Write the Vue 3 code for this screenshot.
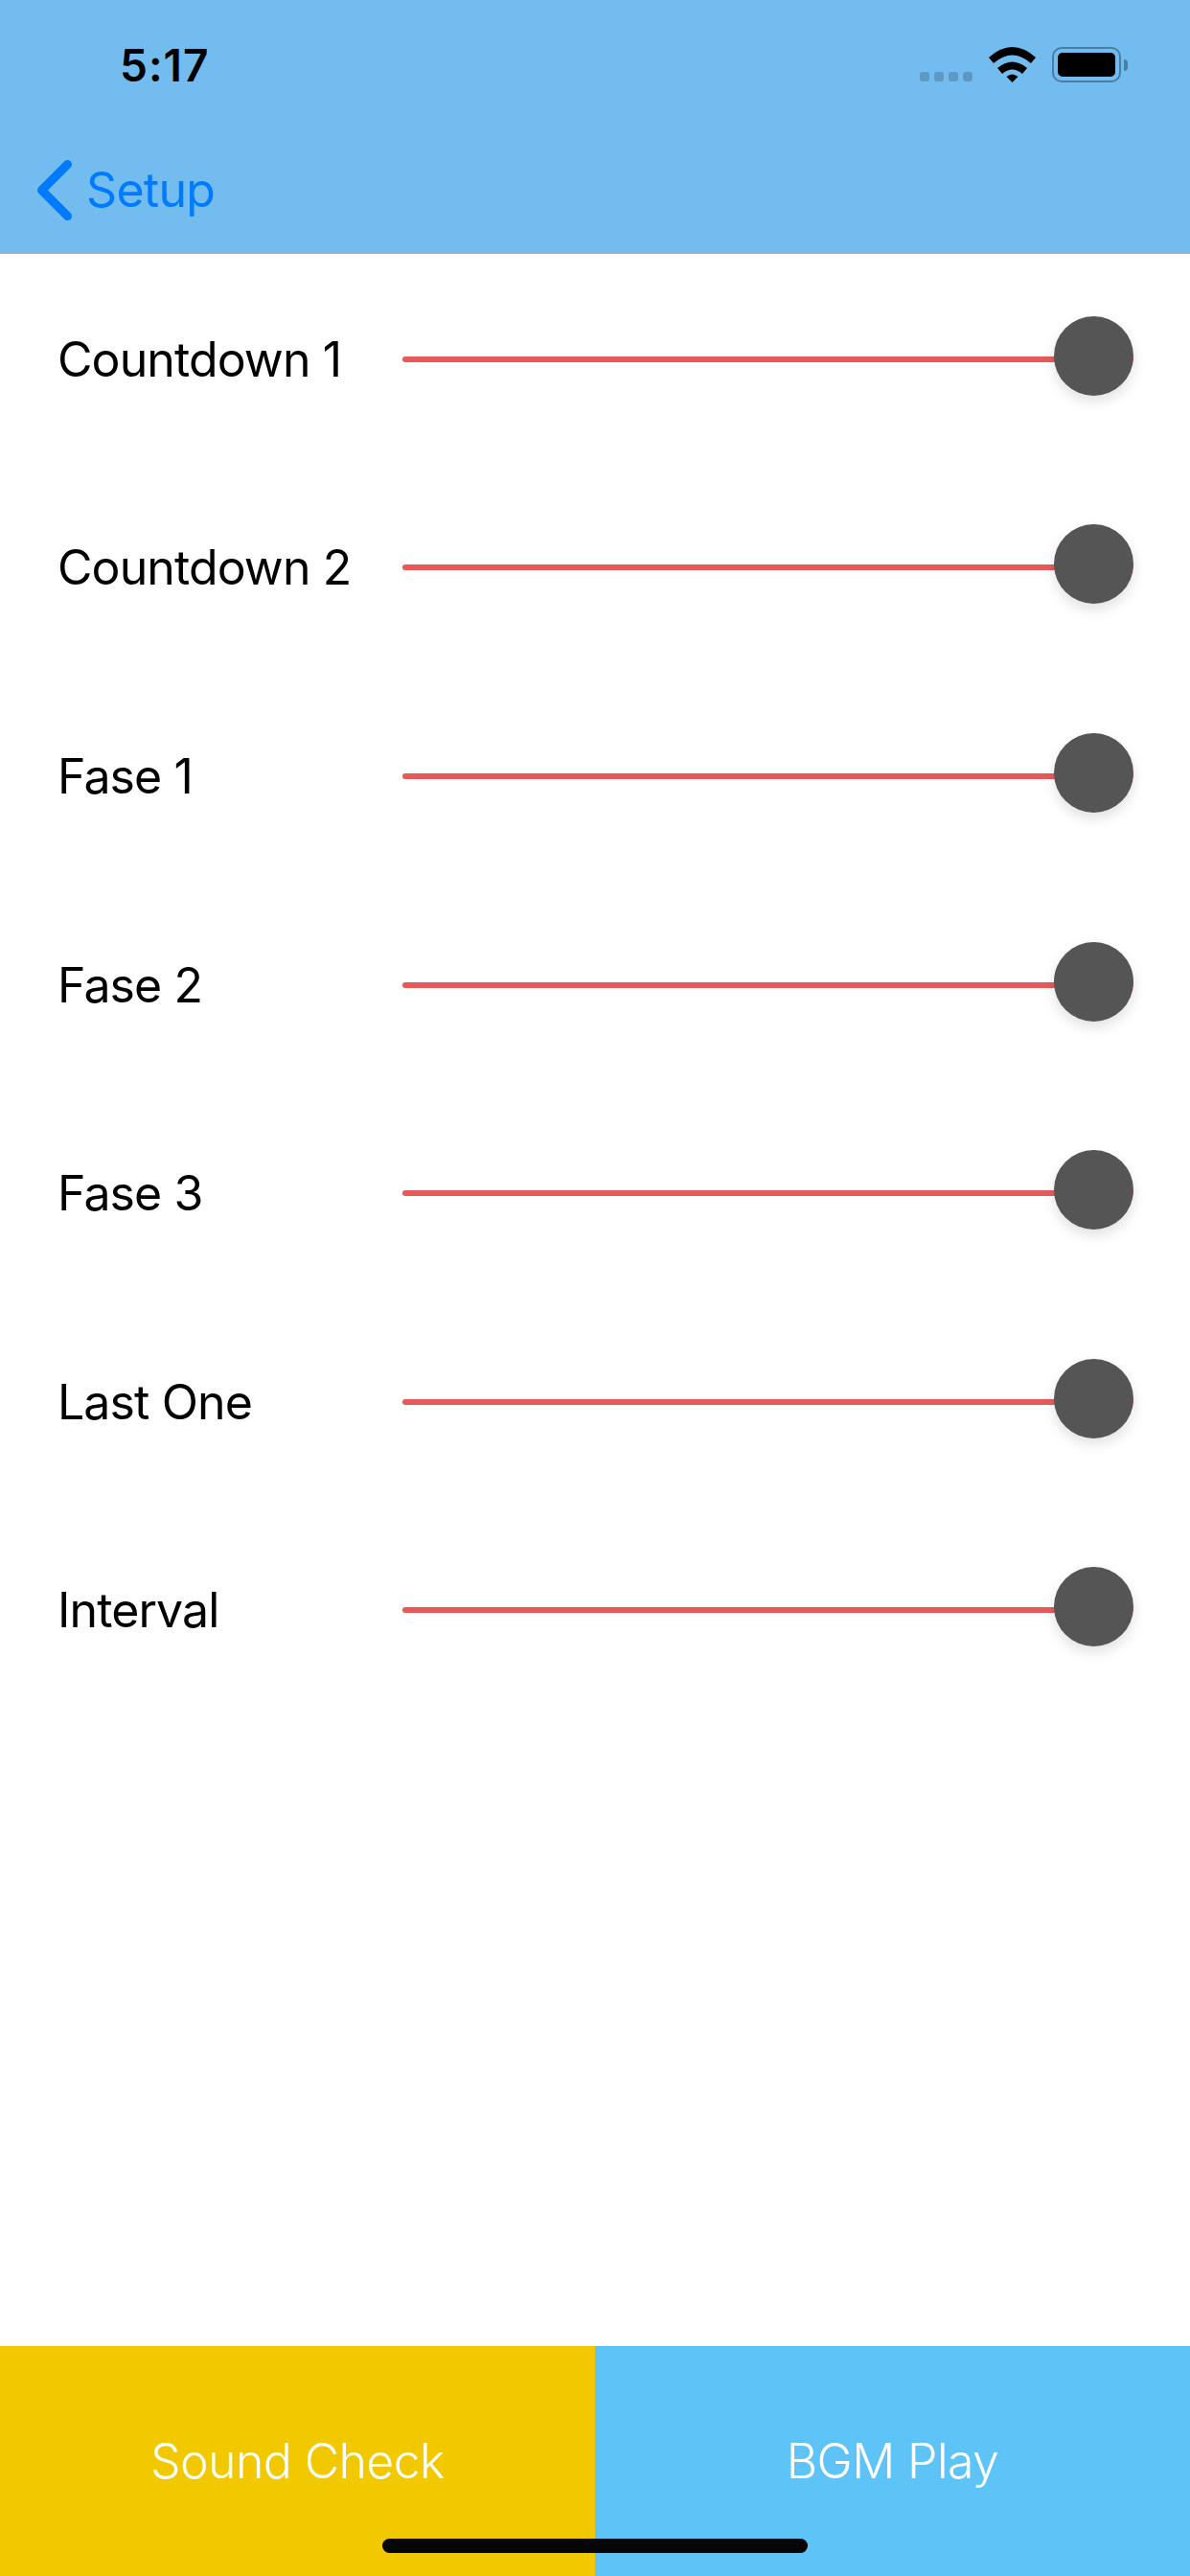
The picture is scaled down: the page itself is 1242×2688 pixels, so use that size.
<template>
  <div class="screen">
    <header class="nav-header">
      <div class="status-bar">
        <span class="clock">5:17</span>
        <div class="status-icons">
          <div class="signal-dots">
            <span v-for="n in 4" :key="n" class="signal-dot" />
          </div>
          <svg class="wifi" viewBox="0 0 50 37" width="50" height="37">
            <path d="M0 11Q24.5-11 49 11L44 17Q24.5 0 5 17Z" />
            <path d="M9 22Q24.5 9 40 22L35 28Q24.5 19 14 28Z" />
            <path d="M18.5 31Q24.5 26 30.5 31L24.5 37Z" />
          </svg>
          <div class="battery">
            <div class="battery-level" />
          </div>
          <span class="battery-nub" />
        </div>
      </div>
      <div class="nav-bar">
        <svg class="back-icon" viewBox="0 0 36 63" width="36" height="63">
          <path d="M31.5 4.5L4.5 31.5L31.5 58.5" />
        </svg>
        <span class="back-label">Setup</span>
      </div>
    </header>

    <main class="sliders">
      <div v-for="item in items" :key="item" class="slider-row">
        <span class="slider-label">{{ item }}</span>
        <div class="slider-track">
          <span class="slider-thumb" />
        </div>
      </div>
    </main>

    <footer class="actions">
      <button class="action action--check" type="button">Sound Check</button>
      <button class="action action--play" type="button">BGM Play</button>
      <span class="home-indicator" />
    </footer>
  </div>
</template>

<script setup>
const items = ['Countdown 1', 'Countdown 2', 'Fase 1', 'Fase 2', 'Fase 3', 'Last One', 'Interval']
</script>

<style>
html,
body {
  margin: 0;
  background: #fff;
}
</style>

<style scoped>
.screen {
  width: 1242px;
  height: 2688px;
  display: flex;
  flex-direction: column;
  overflow: hidden;
  background: #fff;
  font-family: Inter, "Liberation Sans", sans-serif;
}

.nav-header {
  height: 264px;
  flex: none;
  background: #72bcf0;
  border-bottom: 1px solid #b2b2b2;
}

.status-bar {
  height: 132px;
  display: flex;
  justify-content: space-between;
  padding: 0 65px 0 125px;
}

.clock {
  margin-top: 42px;
  font-size: 46px;
  line-height: 52px;
  font-weight: 600;
  letter-spacing: 1px;
  color: #000;
}

.status-icons {
  display: flex;
  align-items: flex-end;
  height: 37px;
  margin-top: 49px;
}

.signal-dots {
  display: flex;
  gap: 5px;
  margin-right: 17px;
  margin-bottom: 1px;
}

.signal-dot {
  width: 10px;
  height: 10px;
  border-radius: 3px;
  background: #5c9ac4;
}

.wifi {
  fill: #000;
  margin-right: 16px;
}

.battery {
  box-sizing: border-box;
  width: 72px;
  height: 37px;
  padding: 4px;
  border: 2px solid #4a7ea3;
  border-radius: 10px;
}

.battery-level {
  height: 100%;
  border-radius: 5px;
  background: #000;
}

.battery-nub {
  width: 4px;
  height: 12px;
  margin: 0 0 12px 3px;
  border-radius: 0 4px 4px 0;
  background: #4a7ea3;
}

.nav-bar {
  display: flex;
  align-items: center;
  height: 132px;
  padding-left: 39px;
}

.back-icon {
  fill: none;
  stroke: #007aff;
  stroke-width: 9;
  stroke-linecap: round;
  stroke-linejoin: round;
  margin-right: 15px;
}

.back-label {
  font-size: 50px;
  letter-spacing: -0.7px;
  color: #007aff;
}

.sliders {
  flex: 1;
  padding-top: 1px;
}

.slider-row {
  height: 217.6px;
  display: flex;
  align-items: center;
  padding: 0 59px 0 60px;
}

.slider-label {
  width: 360px;
  flex: none;
  font-size: 50px;
  letter-spacing: -0.9px;
  color: #000;
}

.slider-track {
  position: relative;
  flex: 1;
  height: 6px;
  border-radius: 3px;
  background: #e85a5a;
}

.slider-thumb {
  position: absolute;
  right: 0;
  top: -42px;
  width: 83px;
  height: 83px;
  border-radius: 50%;
  background: #555;
  box-shadow: 0 6px 14px rgba(0, 0, 0, 0.12);
}

.actions {
  position: relative;
  height: 240px;
  flex: none;
  display: flex;
}

.action {
  flex: 1;
  border: 0;
  padding: 0;
  font: inherit;
  font-size: 50px;
  font-weight: 300;
  letter-spacing: -0.6px;
  color: #fff;
}

.action--check {
  background: #f2c800;
}

.action--play {
  background: #5ec4f8;
}

.home-indicator {
  position: absolute;
  left: 399px;
  top: 201px;
  width: 444px;
  height: 15px;
  border-radius: 8px;
  background: #060606;
}
</style>
